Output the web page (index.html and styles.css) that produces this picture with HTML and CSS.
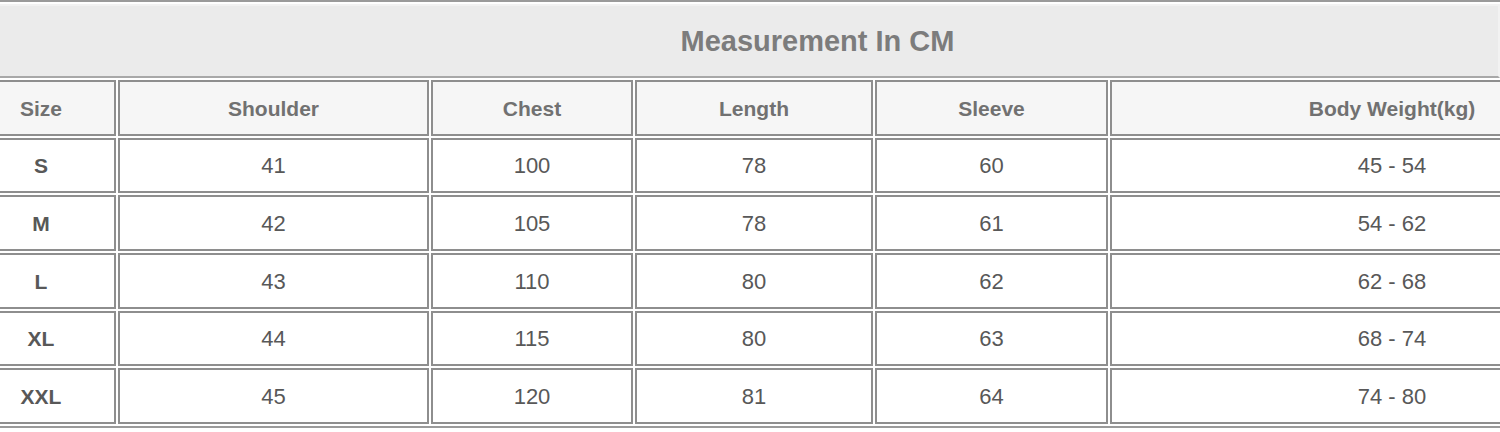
FILE: index.html
```html
<!DOCTYPE html>
<html lang="en">
<head>
<meta charset="utf-8">
<title>Measurement In CM</title>
<link rel="stylesheet" href="styles.css">
</head>
<body>
<div class="chart">
  <div class="title">Measurement In CM</div>

  <div class="cell head first">Size</div>
  <div class="cell head">Shoulder</div>
  <div class="cell head">Chest</div>
  <div class="cell head">Length</div>
  <div class="cell head">Sleeve</div>
  <div class="cell head last">Body Weight(kg)</div>

  <div class="cell size first">S</div>
  <div class="cell">41</div>
  <div class="cell">100</div>
  <div class="cell">78</div>
  <div class="cell">60</div>
  <div class="cell last">45 - 54</div>

  <div class="cell size first">M</div>
  <div class="cell">42</div>
  <div class="cell">105</div>
  <div class="cell">78</div>
  <div class="cell">61</div>
  <div class="cell last">54 - 62</div>

  <div class="cell size first">L</div>
  <div class="cell">43</div>
  <div class="cell">110</div>
  <div class="cell">80</div>
  <div class="cell">62</div>
  <div class="cell last">62 - 68</div>

  <div class="cell size first">XL</div>
  <div class="cell">44</div>
  <div class="cell">115</div>
  <div class="cell">80</div>
  <div class="cell">63</div>
  <div class="cell last">68 - 74</div>

  <div class="cell size first">XXL</div>
  <div class="cell">45</div>
  <div class="cell">120</div>
  <div class="cell">81</div>
  <div class="cell">64</div>
  <div class="cell last">74 - 80</div>
</div>
</body>
</html>
```

FILE: styles.css
```css
html, body {
  margin: 0;
  padding: 0;
  background: #ffffff;
  overflow: hidden;
}

body {
  width: 1500px;
  height: 432px;
  font-family: "Liberation Sans", Arial, sans-serif;
}

.chart {
  display: grid;
  grid-template-columns: 116px 311px 202px 238px 233px 390px;
  grid-template-rows: 74px repeat(6, 55.67px);
  gap: 2px;
  padding: 2px 0;
  border-top: 2px solid #9a9a9a;
  border-bottom: 2px solid #9a9a9a;
  width: 1500px;
  box-sizing: border-box;
}

.title {
  grid-column: 1 / -1;
  background: #ebebeb;
  border: 2px solid #f2f2f2;
  border-left: none;
  border-bottom-color: #a8a8a8;
  box-sizing: border-box;
  display: flex;
  align-items: center;
  justify-content: center;
  padding-left: 137px;
  font-weight: bold;
  font-size: 29px;
  color: #7c7c7c;
}

.cell {
  box-sizing: border-box;
  border: 2px solid #8e8e8e;
  display: flex;
  align-items: center;
  justify-content: center;
  padding-top: 2px;
  font-size: 22px;
  color: #585858;
  background: #ffffff;
}

.first {
  border-left: none;
  padding-right: 32px;
}

.last {
  border-right: none;
  padding-left: 172px;
}

.head {
  background: #f6f6f6;
  font-weight: bold;
  font-size: 21px;
  color: #717171;
}

.size {
  font-weight: bold;
  font-size: 21px;
  color: #585858;
}
```
